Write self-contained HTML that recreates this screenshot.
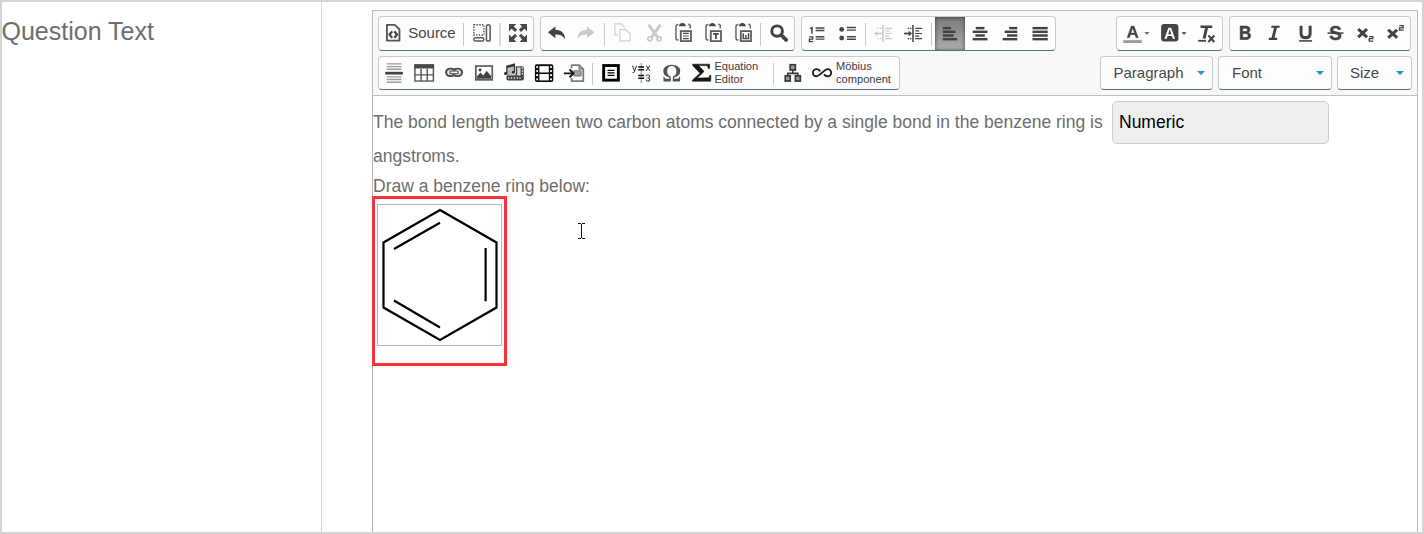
<!DOCTYPE html>
<html><head><meta charset="utf-8"><title>Question Text</title>
<style>
html,body{margin:0;padding:0}
body{width:1424px;height:534px;position:relative;overflow:hidden;background:#fff;font-family:"Liberation Sans",sans-serif}
.frame{position:absolute;left:0;top:0;width:1420px;height:530px;border:2px solid #d4d4d4;z-index:50;pointer-events:none}
.qt{position:absolute;left:1.500px;top:16px;font-size:25px;line-height:30px;color:#6e6e6e;white-space:nowrap}
.vline{position:absolute;left:321px;top:0;width:1px;height:534px;background:#d6d6d6}
.ed{position:absolute;left:372px;top:10px;width:1044px;height:540px;border:1px solid #b8b8b8;background:#fff}
.tb{position:absolute;left:373px;top:11px;width:1044px;height:84px;background:#f8f8f8;border-bottom:1px solid #bfbfbf}
.grp{position:absolute;box-sizing:border-box;background:#fdfdfd;border:1px solid #c5ccce;border-bottom-color:#55707f;border-radius:4px}
.sep{position:absolute;width:1px;height:23px;background:#c9c9c9}
.ic{position:absolute;overflow:visible;opacity:.999}
.on{position:absolute;width:30px;height:33px;background:linear-gradient(to bottom,#7c7c7c 0%,#8b8b8b 35%,#9c9d9d 70%,#abacac 100%);box-shadow:inset 0 1px 4px rgba(0,0,0,.38),inset 0 0 3px rgba(0,0,0,.25)}
.lbl{position:absolute;font-size:15px;line-height:20px;color:#474747;white-space:nowrap}
.sm{position:absolute;font-size:11.100px;line-height:13px;color:#3c3c3c;white-space:nowrap}
.cmb{position:absolute;font-size:15px;line-height:20px;color:#474747;white-space:nowrap}
.arr{position:absolute;width:0;height:0;border-left:4.900px solid transparent;border-right:4.900px solid transparent;border-top:4.500px solid #1b98c6}
.p{position:absolute;left:373px;font-size:17.500px;line-height:22px;color:#6d6d6d;white-space:nowrap}
.num{position:absolute;left:1112px;top:101px;width:217px;height:43px;box-sizing:border-box;background:#eee;border:1px solid #ccc;border-radius:5px;font-size:17.500px;line-height:40px;color:#000;padding-left:6px}
.cur{position:absolute;background:#111}
.red{position:absolute;left:372px;top:196px;width:135px;height:170px;box-sizing:border-box;border:3px solid #fa3338}
.img{position:absolute;left:377px;top:204px;width:125px;height:142px;box-sizing:border-box;border:1px solid #b6b6b6;background:#fff}
</style></head><body>
<div class="qt">Question Text</div>
<div class="vline"></div>
<div class="ed"></div>
<div class="tb"></div>
<div class="grp" style="left:378px;top:16px;width:156px;height:35px"></div>
<div class="grp" style="left:540px;top:16px;width:255px;height:35px"></div>
<div class="grp" style="left:801px;top:16px;width:255px;height:35px"></div>
<div class="grp" style="left:1116px;top:16px;width:107px;height:35px"></div>
<div class="grp" style="left:1229px;top:16px;width:182px;height:35px"></div>
<div class="lbl" style="left:408.2px;top:23.3px;">Source</div>
<div class="sep" style="left:463px;top:23px;height:23px"></div>
<div class="sep" style="left:604px;top:23px;height:23px"></div>
<div class="sep" style="left:760px;top:23px;height:23px"></div>
<div class="sep" style="left:865px;top:23px;height:23px"></div>
<div class="sep" style="left:931px;top:23px;height:23px"></div>
<div class="sep" style="left:499px;top:23px;height:23px;width:2px;background:#dadada"></div>
<div class="on" style="left:935px;top:17px"></div>
<svg class="ic" style="left:383px;top:21px" width="21" height="24"><svg x="3.0" y="3.0" width="14.4" height="17.4" viewBox="3.65 1.65 13.2 16.7" preserveAspectRatio="none" overflow="visible"><path d="M4.5 2.5h7.2l4.3 4.300v10.700h-11.500z" fill="none" stroke="#555" stroke-width="1.700" stroke-linejoin="round"/>
<path d="M9.300 8.700L6.900 11.800L9.300 14.900M11.300 8.700L13.700 11.800L11.300 14.900" fill="none" stroke="#444" stroke-width="2.100"/></svg></svg>
<svg class="ic" style="left:470px;top:21px" width="24" height="24"><svg x="3.1" y="3.0" width="17.8" height="17.8" viewBox="1.85 1.85 17.4 17.3" preserveAspectRatio="none" overflow="visible"><rect x="2.600" y="2.600" width="9.800" height="10" fill="none" stroke="#555" stroke-width="1.400" stroke-dasharray="1.400 1.200"/>
<rect x="14.900" y="2.600" width="3.600" height="15.800" rx="1.800" fill="#fff" stroke="#5a5a5a" stroke-width="1.500"/>
<rect x="2.600" y="15.200" width="9.800" height="3.200" rx="1.600" fill="#fff" stroke="#5a5a5a" stroke-width="1.500"/></svg></svg>
<svg class="ic" style="left:506px;top:20px" width="24" height="25"><svg x="3.0" y="3.9" width="18.0" height="18.0" viewBox="2.0 2.0 16.0 16.0" preserveAspectRatio="none" overflow="visible"><g fill="#484848"><path d="M2 2h6.600l-2.300 2.300 3 3-2 2-3-3L2 8.600z"/><path d="M18 2v6.600l-2.300-2.300-3 3-2-2 3-3L11.400 2z"/><path d="M2 18v-6.600l2.300 2.300 3-3 2 2-3 3L8.600 18z"/><path d="M18 18h-6.600l2.300-2.300-3-3 2-2 3 3L18 11.400z"/></g></svg></svg>
<svg class="ic" style="left:544px;top:23px" width="25" height="20"><svg x="3.9" y="3.5" width="17.2" height="12.7" viewBox="1.8 3.2 15.6 12.6" preserveAspectRatio="none" overflow="visible"><path d="M8.6 3.2L1.8 9l6.8 5.8v-3.6c3.8-.2 6.6 1 8.8 4.6 0-5.6-3.2-9.2-8.8-9.4z" fill="#424242"/></svg></svg>
<svg class="ic" style="left:574px;top:23px" width="24" height="20"><svg x="3.4" y="3.5" width="16.9" height="12.7" viewBox="2.6 3.2 15.6 12.55" preserveAspectRatio="none" overflow="visible"><path d="M8.6 3.2L1.8 9l6.8 5.8v-3.6c3.8-.2 6.6 1 8.8 4.6 0-5.6-3.2-9.2-8.8-9.4z" fill="#c9c9c9" transform="translate(20,0) scale(-1,1)"/></svg></svg>
<svg class="ic" style="left:611px;top:20px" width="23" height="25"><svg x="3.3" y="3.2" width="16.5" height="18.4" viewBox="0.0 0.0 16.55 18.65" preserveAspectRatio="none" overflow="visible"><path d="M3.900 11.500H.600V.600H7L10.600 4.600" fill="none" stroke="#d0d0d0" stroke-width="1.200"/>
<path d="M5.700 6.500H11.600L15.900 11V18H5.700Z" fill="#fff" stroke="#d0d0d0" stroke-width="1.300" stroke-linejoin="round"/></svg></svg>
<svg class="ic" style="left:643px;top:21px" width="23" height="24"><svg x="3.9" y="3.0" width="15.3" height="17.6" viewBox="3.3 1.25 13.4 16.85" preserveAspectRatio="none" overflow="visible"><path d="M4.800 2L12.400 13.400M15.200 2L7.600 13.400" stroke="#c9c9c9" stroke-width="2.700" fill="none"/>
<circle cx="6" cy="15.400" r="1.900" fill="none" stroke="#c9c9c9" stroke-width="1.600"/><circle cx="14" cy="15.400" r="1.900" fill="none" stroke="#c9c9c9" stroke-width="1.600"/></svg></svg>
<svg class="ic" style="left:672px;top:19px" width="23" height="26"><svg x="3.2" y="3.9" width="16.7" height="19.1" viewBox="0.15 0.0 16.55 19.1" preserveAspectRatio="none" overflow="visible"><path d="M3.400 1.700C1.500 1.700 .900 2.400 .900 3.800V15C.900 16.400 1.500 17.100 3.400 17.100M13 1.400C14.600 1.400 15.100 2.100 15.100 3.400V5.600" fill="none" stroke="#6a6a6a" stroke-width="1.500"/>
<path d="M3.900 3.400C3.900 1.300 5.300 0 7.300 0S10.700 1.300 10.700 3.400Z" fill="#444"/>
<rect x="5.700" y="8.200" width="10.100" height="10" fill="#fff" stroke="#5e5e5e" stroke-width="1.800"/><path d="M7.900 10.500h5.700M7.900 15.700h5.700" stroke="#444" stroke-width="1.300"/><path d="M7.900 13.100h5.700" stroke="#777" stroke-width="1.300"/></svg></svg>
<svg class="ic" style="left:702px;top:19px" width="23" height="26"><svg x="3.2" y="3.9" width="16.7" height="19.1" viewBox="0.15 0.0 16.55 19.1" preserveAspectRatio="none" overflow="visible"><path d="M3.400 1.700C1.500 1.700 .900 2.400 .900 3.800V15C.900 16.400 1.500 17.100 3.400 17.100M13 1.400C14.600 1.400 15.100 2.100 15.100 3.400V5.600" fill="none" stroke="#6a6a6a" stroke-width="1.500"/>
<path d="M3.900 3.400C3.900 1.300 5.300 0 7.300 0S10.700 1.300 10.700 3.400Z" fill="#444"/>
<rect x="5.700" y="8.200" width="10.100" height="10" fill="#fff" stroke="#5e5e5e" stroke-width="1.800"/><path d="M7.900 10.900h5.700M10.750 10.900v5.200" stroke="#444" stroke-width="1.700" fill="none"/></svg></svg>
<svg class="ic" style="left:732px;top:19px" width="23" height="26"><svg x="3.2" y="3.9" width="16.7" height="19.1" viewBox="0.15 0.0 16.55 19.1" preserveAspectRatio="none" overflow="visible"><path d="M3.400 1.700C1.500 1.700 .900 2.400 .900 3.800V15C.900 16.400 1.500 17.100 3.400 17.100M13 1.400C14.600 1.400 15.100 2.100 15.100 3.400V5.600" fill="none" stroke="#6a6a6a" stroke-width="1.500"/>
<path d="M3.900 3.400C3.900 1.300 5.300 0 7.300 0S10.700 1.300 10.700 3.400Z" fill="#444"/>
<rect x="5.700" y="8.200" width="10.100" height="10" fill="#fff" stroke="#5e5e5e" stroke-width="1.800"/><path d="M8.100 10.400v5.300h5.300v-5.300M10.750 12v3.700" stroke="#444" stroke-width="1.400" fill="none"/></svg></svg>
<svg class="ic" style="left:767px;top:21px" width="24" height="24"><svg x="3.3" y="3.4" width="17.7" height="17.3" viewBox="1.55 1.55 17.3 17.3" preserveAspectRatio="none" overflow="visible"><circle cx="8.200" cy="8.200" r="5.200" fill="none" stroke="#424242" stroke-width="2.900"/><path d="M12.400 12.400L17 17" stroke="#424242" stroke-width="3.700" stroke-linecap="round"/></svg></svg>
<svg class="ic" style="left:805px;top:23px" width="23" height="23"><svg x="3.7" y="3.4" width="15.7" height="15.8" viewBox="0.05 -0.25 14.15 15.7" preserveAspectRatio="none" overflow="visible"><path d="M6.300 1.300h7.900M6.300 3.800h7.900M6.300 10.100h7.900M6.300 12.400h7.900" stroke="#444" stroke-width="1.400"/>
<path d="M1.300 2l1.700-1v6" fill="none" stroke="#444" stroke-width="1.400"/>
<path d="M0.300 10.100h3.300v2.200h-2.900v2.500h3.300" fill="none" stroke="#444" stroke-width="1.300"/></svg></svg>
<svg class="ic" style="left:836px;top:23px" width="23" height="21"><svg x="3.3" y="3.8" width="16.6" height="13.7" viewBox="-0.3 0.0 16.6 13.3" preserveAspectRatio="none" overflow="visible"><circle cx="2.100" cy="2.500" r="2.400" fill="#444"/><circle cx="2.100" cy="10.900" r="2.400" fill="#444"/>
<path d="M7.300 0.700h9M7.300 3.200h9M7.300 9.700h9M7.300 12h9" stroke="#444" stroke-width="1.400"/></svg></svg>
<svg class="ic" style="left:871px;top:22px" width="25" height="23"><svg x="3.2" y="3.0" width="18.0" height="17.0" viewBox="1.8 2.4 16.0 15.2" preserveAspectRatio="none" overflow="visible"><path d="M9.6 2.4v15.2" stroke="#c9c9c9" stroke-width="1.4"/>
<path d="M11.600 5.400h6.200M11.600 7.700h3.600M11.600 10h6.200M11.600 12.300h3.600M11.600 14.600h6.200" stroke="#c9c9c9" stroke-width="1"/>
<path d="M4.800 5.400h1.200M7 5.400h1.200M4.800 14.600h1.200M7 14.600h1.200" stroke="#c9c9c9" stroke-width="1"/><path d="M8.600 10h-5.800" stroke="#c9c9c9" stroke-width="1.400"/><path d="M4.600 7.800l-2.800 2.200l2.800 2.200z" fill="#c9c9c9"/></svg></svg>
<svg class="ic" style="left:901px;top:22px" width="25" height="23"><svg x="3.1" y="3.0" width="18.0" height="17.0" viewBox="1.6 2.4 16.2 15.2" preserveAspectRatio="none" overflow="visible"><path d="M9.6 2.4v15.2" stroke="#424242" stroke-width="1.4"/>
<path d="M11.600 5.400h6.200M11.600 7.700h3.600M11.600 10h6.200M11.600 12.300h3.600M11.600 14.600h6.200" stroke="#424242" stroke-width="1"/>
<path d="M4.800 5.400h1.200M7 5.400h1.200M4.800 14.600h1.200M7 14.600h1.200" stroke="#424242" stroke-width="1"/><path d="M1.600 10h5.800" stroke="#424242" stroke-width="1.500"/><path d="M5.800 7.600l2.900 2.400l-2.900 2.400z" fill="#424242"/></svg></svg>
<svg class="ic" style="left:939px;top:23px" width="22" height="21"><svg x="3.8" y="3.9" width="14.3" height="13.5" viewBox="2.4 3.4 14.8 13.2" preserveAspectRatio="none" overflow="visible"><path d="M2.4 4.6h8.6" stroke="#424242" stroke-width="2.4"/><path d="M2.4 8.2h13.2" stroke="#424242" stroke-width="2.4"/><path d="M2.4 11.8h11.2" stroke="#424242" stroke-width="2.4"/><path d="M2.4 15.4h14.799999999999999" stroke="#424242" stroke-width="2.4"/></svg></svg>
<svg class="ic" style="left:969px;top:23px" width="22" height="21"><svg x="3.7" y="3.9" width="14.8" height="13.5" viewBox="3.0 3.4 14.4 13.2" preserveAspectRatio="none" overflow="visible"><path d="M6 4.6h8.4" stroke="#424242" stroke-width="2.4"/><path d="M3 8.2h14.399999999999999" stroke="#424242" stroke-width="2.4"/><path d="M5.6 11.8h9.200000000000001" stroke="#424242" stroke-width="2.4"/><path d="M3 15.4h14.399999999999999" stroke="#424242" stroke-width="2.4"/></svg></svg>
<svg class="ic" style="left:999px;top:23px" width="22" height="21"><svg x="3.7" y="3.9" width="14.6" height="13.5" viewBox="2.6 3.4 14.8 13.2" preserveAspectRatio="none" overflow="visible"><path d="M9.2 4.6h8.2" stroke="#424242" stroke-width="2.4"/><path d="M4.6 8.2h12.799999999999999" stroke="#424242" stroke-width="2.4"/><path d="M7 11.8h10.399999999999999" stroke="#424242" stroke-width="2.4"/><path d="M2.6 15.4h14.799999999999999" stroke="#424242" stroke-width="2.4"/></svg></svg>
<svg class="ic" style="left:1029px;top:23px" width="22" height="21"><svg x="3.5" y="3.9" width="15.2" height="13.5" viewBox="2.6 3.4 14.8 13.2" preserveAspectRatio="none" overflow="visible"><path d="M2.6 4.6h14.799999999999999" stroke="#424242" stroke-width="2.4"/><path d="M2.6 8.2h14.799999999999999" stroke="#424242" stroke-width="2.4"/><path d="M2.6 11.8h14.799999999999999" stroke="#424242" stroke-width="2.4"/><path d="M2.6 15.4h14.799999999999999" stroke="#424242" stroke-width="2.4"/></svg></svg>
<svg class="ic" style="left:1120px;top:22px" width="33" height="24"><svg x="3.3" y="3.9" width="26.3" height="17.1" viewBox="0.0 0.4 26.3 16.9" preserveAspectRatio="none" overflow="visible"><path transform="translate(3.33 12.1) scale(0.00820 -0.00820)" d="M1133 0 1008 360H471L346 0H51L565 1409H913L1425 0ZM739 1192 733 1170Q723 1134 709 1088Q695 1042 537 582H942L803 987L760 1123Z" fill="#444" stroke="#444" stroke-width="36.57"/><rect x="0" y="14.500" width="18.500" height="2.800" fill="#9a9a9a"/>
<path d="M21 6.600h5.300l-2.650 2.400z" fill="#444"/></svg></svg>
<svg class="ic" style="left:1158px;top:21px" width="32" height="24"><svg x="3.1" y="3.1" width="25.6" height="17.5" viewBox="0.0 0.0 25.7 17.5" preserveAspectRatio="none" overflow="visible"><rect x="0" y="0" width="17.400" height="17.500" rx="3" fill="#444"/>
<path transform="translate(2.92 14.6) scale(0.00781 -0.00781)" d="M1133 0 1008 360H471L346 0H51L565 1409H913L1425 0ZM739 1192 733 1170Q723 1134 709 1088Q695 1042 537 582H942L803 987L760 1123Z" fill="#fff"/>
<path d="M20.400 8.200h5.300l-2.650 2.400z" fill="#444"/></svg></svg>
<svg class="ic" style="left:1195px;top:22px" width="24" height="24"><svg x="3.2" y="3.6" width="16.9" height="17.1" viewBox="2.0 2.4 15.9 15.1" preserveAspectRatio="none" overflow="visible"><path d="M4.200 2.400h11v2.200h-4l-2.200 9.200h-2.800l2.200-9.200h-4.200z" fill="#424242"/><path d="M2 15.8h7.4" stroke="#424242" stroke-width="1.6"/>
<path d="M11.6 11.2l5.6 5.6M17.2 11.2l-5.6 5.6" stroke="#424242" stroke-width="1.9"/></svg></svg>
<svg class="ic" style="left:1236px;top:22px" width="18" height="21"><svg x="3.9" y="3.7" width="11.0" height="14.2" viewBox="4.05 3.15 12.3 13.8" preserveAspectRatio="none" overflow="visible"><path transform="translate(3.14 16.6) scale(0.00928 -0.00928)" d="M1386 402Q1386 210 1242 105Q1098 0 842 0H137V1409H782Q1040 1409 1172.5 1319.5Q1305 1230 1305 1055Q1305 935 1238.5 852.5Q1172 770 1036 741Q1207 721 1296.5 633.5Q1386 546 1386 402ZM1008 1015Q1008 1110 947.5 1150Q887 1190 768 1190H432V841H770Q895 841 951.5 884.5Q1008 928 1008 1015ZM1090 425Q1090 623 806 623H432V219H817Q959 219 1024.5 270.5Q1090 322 1090 425Z" fill="#424242" stroke="#424242" stroke-width="75.45"/></svg></svg>
<svg class="ic" style="left:1265px;top:22px" width="18" height="21"><svg x="3.8" y="3.7" width="10.9" height="14.2" viewBox="5.0 3.0 10.4 14.0" preserveAspectRatio="none" overflow="visible"><path d="M7.4 3h8v2h-2.6l-2.4 10h2.6v2h-8v-2h2.6l2.4-10h-2.6z" fill="#424242"/></svg></svg>
<svg class="ic" style="left:1296px;top:22px" width="20" height="23"><svg x="3.1" y="3.7" width="13.0" height="16.0" viewBox="3.4 3.0 13.2 15.35" preserveAspectRatio="none" overflow="visible"><path d="M5.4 3v7.4c0 2.8 1.8 4 4.6 4s4.600-1.200 4.600-4v-7.400" fill="none" stroke="#424242" stroke-width="3"/><path d="M3.400 17.600h13.200" stroke="#424242" stroke-width="1.5"/></svg></svg>
<svg class="ic" style="left:1324px;top:22px" width="23" height="22"><svg x="3.5" y="3.7" width="16.0" height="14.6" viewBox="1.8 3.1 16.4 14.35" preserveAspectRatio="none" overflow="visible"><path transform="translate(3.5 17) scale(0.00952 -0.00952)" d="M1286 406Q1286 199 1132.5 89.5Q979 -20 682 -20Q411 -20 257 76Q103 172 59 367L344 414Q373 302 457 251.5Q541 201 690 201Q999 201 999 389Q999 449 963.5 488Q928 527 863.5 553Q799 579 616 616Q458 653 396 675.5Q334 698 284 728.5Q234 759 199 802Q164 845 144.5 903Q125 961 125 1036Q125 1227 268.5 1328.5Q412 1430 686 1430Q948 1430 1079.5 1348Q1211 1266 1249 1077L963 1038Q941 1129 873.5 1175Q806 1221 680 1221Q412 1221 412 1053Q412 998 440.5 963Q469 928 525 903.5Q581 879 752 842Q955 799 1042.5 762.5Q1130 726 1181 677.5Q1232 629 1259 561.5Q1286 494 1286 406Z" fill="#424242" stroke="#424242" stroke-width="52.51"/><path d="M1.800 10.400h16.400" stroke="#424242" stroke-width="1.500"/></svg></svg>
<svg class="ic" style="left:1354px;top:25px" width="23" height="20"><svg x="3.1" y="3.0" width="16.4" height="13.7" viewBox="1.75 4.15 15.7 13.9" preserveAspectRatio="none" overflow="visible"><path d="M2.800 5.200l8.400 8.400M11.200 5.200l-8.400 8.400" stroke="#424242" stroke-width="3"/>
<path d="M13.200 12.800h3.600v2.200h-3.400v2.400h3.800" fill="none" stroke="#424242" stroke-width="1.300"/></svg></svg>
<svg class="ic" style="left:1384px;top:22px" width="23" height="20"><svg x="3.1" y="3.1" width="16.7" height="13.6" viewBox="1.75 1.95 15.7 14.3" preserveAspectRatio="none" overflow="visible"><path d="M2.800 6.800l8.400 8.400M11.200 6.800l-8.400 8.400" stroke="#424242" stroke-width="3"/>
<path d="M13.200 2.600h3.600v2.200h-3.400v2.400h3.800" fill="none" stroke="#424242" stroke-width="1.300"/></svg></svg>
<div class="grp" style="left:378px;top:56px;width:522px;height:34px"></div>
<div class="sep" style="left:592px;top:63px;height:22px"></div>
<div class="sep" style="left:773px;top:63px;height:22px"></div>
<svg class="ic" style="left:382px;top:60px" width="24" height="26"><svg x="3.2" y="3.2" width="17.7" height="19.7" viewBox="1.6 2.05 16.8 16.1" preserveAspectRatio="none" overflow="visible"><path d="M3 2.600h14M3 4.800h14M3 7h14M3 13.200h14M3 15.400h14M3 17.600h14" stroke="#9c9c9c" stroke-width="1.100"/><path d="M1.600 10.200h16.800" stroke="#424242" stroke-width="2.200"/></svg></svg>
<svg class="ic" style="left:411px;top:61px" width="27" height="24"><svg x="3.2" y="3.3" width="19.9" height="17.4" viewBox="0.95 1.75 18.1 16.9" preserveAspectRatio="none" overflow="visible"><rect x="1.600" y="2.400" width="16.800" height="15.600" fill="#fff" stroke="#555" stroke-width="1.300"/><rect x="1" y="1.800" width="18" height="4" fill="#484848"/>
<path d="M7.200 6v12M12.800 6v12M1.600 12h16.800" stroke="#555" stroke-width="1.300"/></svg></svg>
<svg class="ic" style="left:442px;top:64px" width="25" height="16"><svg x="3.0" y="3.7" width="18.1" height="9.3" viewBox="0.45 4.45 19.1 11.1" preserveAspectRatio="none" overflow="visible"><rect x="1.600" y="5.600" width="9.600" height="8.800" rx="4.400" fill="none" stroke="#484848" stroke-width="2.300"/><rect x="8.800" y="5.600" width="9.600" height="8.800" rx="4.400" fill="none" stroke="#484848" stroke-width="2.300"/>
<rect x="2.900" y="6.900" width="7" height="6.200" rx="3.100" fill="none" stroke="#b5b5b5" stroke-width=".900"/><rect x="10.100" y="6.900" width="7" height="6.200" rx="3.100" fill="none" stroke="#b5b5b5" stroke-width=".900"/>
<rect x="5.400" y="8.400" width="9.200" height="3.200" rx="1.600" fill="#f2f2f2" stroke="#484848" stroke-width="1.300"/></svg></svg>
<svg class="ic" style="left:472px;top:62px" width="25" height="22"><svg x="3.0" y="3.2" width="18.1" height="15.5" viewBox="0.95 2.35 18.1 15.7" preserveAspectRatio="none" overflow="visible"><rect x="1.800" y="3.200" width="16.400" height="14" fill="#fff" stroke="#5c5c5c" stroke-width="1.700"/><circle cx="6" cy="7.200" r="1.500" fill="#424242"/>
<path d="M3 16v-2.400l3.400-3.800 2.800 3 3.400-4.800 4.400 5.400v2.600z" fill="#424242"/></svg></svg>
<svg class="ic" style="left:501px;top:60px" width="26" height="24"><svg x="3.0" y="3.2" width="19.8" height="17.2" viewBox="0.3 0.0 19.5 17.0" preserveAspectRatio="none" overflow="visible"><rect x="2.700" y="2.900" width="17.100" height="14.100" rx="1.600" fill="#444"/>
<rect x="4.400" y="4.200" width="7.400" height="8" fill="#bbb"/><rect x="13.300" y="4.200" width="3.300" height="8" fill="#d8d8d8"/>
<path d="M4.900 14.700h.010M7.700 14.700h.010M10.500 14.700h.010M13.300 14.700h.010M16.100 14.700h.010M18.300 4.800h.010M18.300 7.600h.010M18.300 10.400h.010" stroke="#fff" stroke-width="1.500" stroke-linecap="round"/>
<g stroke="#fff" stroke-width="1.200" stroke-linejoin="round" paint-order="stroke"><path d="M2.500 2.400L11.200 0v8.900a1.800 1.500 0 1 1-1.400-1.400v-4.300l-5.900 1.600v5.400a1.800 1.500 0 1 1-1.400-1.400z" fill="#333"/></g></svg></svg>
<svg class="ic" style="left:531px;top:61px" width="26" height="24"><svg x="3.9" y="3.3" width="18.4" height="17.7" viewBox="1.4 2.4 17.2 15.6" preserveAspectRatio="none" overflow="visible"><rect x="1.400" y="2.400" width="17.200" height="15.600" rx="1.800" fill="#0a0a0a"/><rect x="5.600" y="4" width="8.800" height="5.600" fill="#fff"/><rect x="5.600" y="11" width="8.800" height="5.600" fill="#fff"/>
<g fill="#fff"><circle cx="3.500" cy="4.800" r="1"/><circle cx="3.500" cy="8.400" r="1"/><circle cx="3.500" cy="12" r="1"/><circle cx="3.500" cy="15.600" r="1"/><circle cx="16.500" cy="4.800" r="1"/><circle cx="16.500" cy="8.400" r="1"/><circle cx="16.500" cy="12" r="1"/><circle cx="16.500" cy="15.600" r="1"/></g></svg></svg>
<svg class="ic" style="left:560px;top:61px" width="28" height="24"><svg x="3.9" y="3.3" width="20.3" height="17.7" viewBox="1.2 2.0 18.0 16.4" preserveAspectRatio="none" overflow="visible"><path d="M8 5.600v-2.800h6.800l3.600 3.600v11.200h-10.400v-3" fill="none" stroke="#7c7c7c" stroke-width="1.600" stroke-linejoin="round"/><path d="M14.800 2.800v3.600h3.600" fill="none" stroke="#7c7c7c" stroke-width="1.300"/>
<rect x="10" y="8" width="6.400" height="4.800" rx=".800" fill="#a4a4a4" stroke="#777" stroke-width="1.100"/>
<path d="M1.200 10.400h8.200M6.200 6.800l3.600 3.600-3.600 3.600" fill="none" stroke="#1a1a1a" stroke-width="1.700"/></svg></svg>
<svg class="ic" style="left:599px;top:61px" width="24" height="24"><svg x="3.2" y="3.1" width="17.6" height="17.5" viewBox="0.9 0.9 18.2 18.2" preserveAspectRatio="none" overflow="visible"><rect x="2.400" y="2.400" width="15.200" height="15.200" fill="#fff" stroke="#000" stroke-width="3"/><path d="M6.400 7.400h7.200M6.400 10h7.200M6.400 12.600h7.200" stroke="#000" stroke-width="1.300"/></svg></svg>
<svg class="ic" style="left:629px;top:60px" width="25" height="26"><svg x="3.0" y="3.0" width="18.5" height="20.0" viewBox="0.0 0.0 18.3 20.0" preserveAspectRatio="none" overflow="visible"><path transform="translate(0 8) scale(0.00488 -0.00488)" d="M191 -425Q117 -425 67 -414V-279Q105 -285 151 -285Q319 -285 417 -38L434 5L5 1082H197L425 484Q430 470 437 450.5Q444 431 482 320Q520 209 523 196L593 393L830 1082H1020L604 0Q537 -173 479 -257.5Q421 -342 350.5 -383.5Q280 -425 191 -425Z" fill="#111"/><path transform="translate(13.4 8) scale(0.00488 -0.00488)" d="M801 0 510 444 217 0H23L408 556L41 1082H240L510 661L778 1082H979L612 558L1002 0Z" fill="#111"/><path transform="translate(13 18.3) scale(0.00479 -0.00479)" d="M1049 389Q1049 194 925 87Q801 -20 571 -20Q357 -20 229.5 76.5Q102 173 78 362L264 379Q300 129 571 129Q707 129 784.5 196Q862 263 862 395Q862 510 773.5 574.5Q685 639 518 639H416V795H514Q662 795 743.5 859.5Q825 924 825 1038Q825 1151 758.5 1216.5Q692 1282 561 1282Q442 1282 368.5 1221Q295 1160 283 1049L102 1063Q122 1236 245.5 1333Q369 1430 563 1430Q775 1430 892.5 1331.5Q1010 1233 1010 1057Q1010 922 934.5 837.5Q859 753 715 723V719Q873 702 961 613Q1049 524 1049 389Z" fill="#111"/>
<path d="M9.200 0v20" stroke="#aaa" stroke-width="1.300"/><path d="M6.200 4h5.800M6.200 6.700h5.800M6.200 12.500h5.800M6.200 15.200h5.800" stroke="#111" stroke-width="1.400"/></svg></svg>
<svg class="ic" style="left:660px;top:61px" width="24" height="24"><svg x="3.3" y="3.8" width="16.9" height="16.8" viewBox="1.1 1.0 17.8 16.6" preserveAspectRatio="none" overflow="visible"><path transform="translate(-0.01 17.6) scale(0.01221 -0.01221)" d="M821 1255Q631 1255 528.5 1147Q426 1039 426 837Q426 660 501 557Q576 454 718 432L741 0H116L93 384H179L240 256Q320 240 498 240H607L602 345Q362 379 228 507Q94 635 94 837Q94 1085 283 1220.5Q472 1356 821 1356Q1169 1356 1358.5 1221Q1548 1086 1548 837Q1548 635 1414 507Q1280 379 1040 345L1035 240H1144Q1322 240 1402 256L1463 384H1549L1526 0H901L924 432Q1067 454 1141.5 557.5Q1216 661 1216 837Q1216 1038 1114 1146.5Q1012 1255 821 1255Z" fill="#555"/></svg></svg>
<svg class="ic" style="left:689px;top:60px" width="26" height="25"><svg x="3.2" y="3.9" width="19.1" height="17.6" viewBox="1.8 0.25 16.05 18.2" preserveAspectRatio="none" overflow="visible"><path transform="translate(1.17 18.2) scale(0.01318 -0.01318)" d="M775 817V717L366 263H651Q763 263 924 267.5Q1085 272 1124 279L1160 464H1243L1224 0H67V102L547 632L75 1234V1341H1160V1000H1069L1027 1217Q912 1231 699 1231H460Z" fill="#161616" stroke="#161616" stroke-width="37.93"/></svg></svg>
<svg class="ic" style="left:781px;top:60px" width="24" height="25"><svg x="3.4" y="3.9" width="16.8" height="18.0" viewBox="1.55 1.55 16.9 17.3" preserveAspectRatio="none" overflow="visible"><rect x="7.400" y="2.400" width="5.200" height="5" fill="#999" stroke="#3a3a3a" stroke-width="1.700"/><rect x="2.400" y="13" width="5" height="5" fill="#999" stroke="#3a3a3a" stroke-width="1.700"/><rect x="12.600" y="13" width="5" height="5" fill="#999" stroke="#3a3a3a" stroke-width="1.700"/>
<path d="M10 7.400v3.200M4.900 13v-2.400h10.200v2.400" fill="none" stroke="#3a3a3a" stroke-width="1.600"/></svg></svg>
<svg class="ic" style="left:809px;top:65px" width="27" height="16"><svg x="3.0" y="3.2" width="20.1" height="9.0" viewBox="5.65 6.05 20.6 9.3" preserveAspectRatio="none" overflow="visible"><path d="M13.600 8.600C12.800 7.600 11.600 7 10.300 7A3.700 3.700 0 0 0 10.300 14.400C13.600 14.400 18.300 7 21.600 7A3.700 3.700 0 0 1 21.600 14.400C20.300 14.400 19.200 13.800 18.400 12.900" fill="none" stroke="#1a1a1a" stroke-width="1.900" stroke-linecap="round"/></svg></svg>
<div class="sm" style="left:714.4px;top:59.8px;">Equation<br>Editor</div>
<div class="sm" style="left:836px;top:59.8px;">Möbius<br>component</div>
<div class="grp" style="left:1100px;top:56px;width:113px;height:34px"></div>
<div class="cmb" style="left:1113.5px;top:62.5px;">Paragraph</div>
<div class="arr" style="left:1197.4px;top:70.6px"></div>
<div class="grp" style="left:1218px;top:56px;width:114px;height:34px"></div>
<div class="cmb" style="left:1232px;top:62.5px;">Font</div>
<div class="arr" style="left:1316.4px;top:70.6px"></div>
<div class="grp" style="left:1337px;top:56px;width:75px;height:34px"></div>
<div class="cmb" style="left:1350px;top:62.5px;">Size</div>
<div class="arr" style="left:1396.4px;top:70.6px"></div>
<div class="p" style="top:111px">The bond length between two carbon atoms connected by a single bond in the benzene ring is</div>
<div class="num">Numeric</div>
<div class="p" style="top:145px">angstroms.</div>
<div class="p" style="top:175px">Draw a benzene ring below:</div>
<div class="red"></div>
<div class="img"></div>
<svg class="ic" style="left:377px;top:204px" width="126" height="143" viewBox="0 0 126 143">
<path d="M63 6L119.500 38.500V103.500L63 136L6.500 103.500V38.500Z" fill="none" stroke="#000" stroke-width="2.200" stroke-linejoin="miter"/>
<path d="M63 18.700L17 45M108.600 44V97.200M63 123.500L17 96.500" fill="none" stroke="#000" stroke-width="2.200"/>
</svg>
<div class="cur" style="left:578px;top:223px;width:3px;height:1px"></div><div class="cur" style="left:582px;top:223px;width:3px;height:1px"></div><div class="cur" style="left:581px;top:224px;width:1px;height:14px"></div><div class="cur" style="left:578px;top:238px;width:3px;height:1px"></div><div class="cur" style="left:582px;top:238px;width:3px;height:1px"></div>
<div class="frame"></div>
</body></html>
